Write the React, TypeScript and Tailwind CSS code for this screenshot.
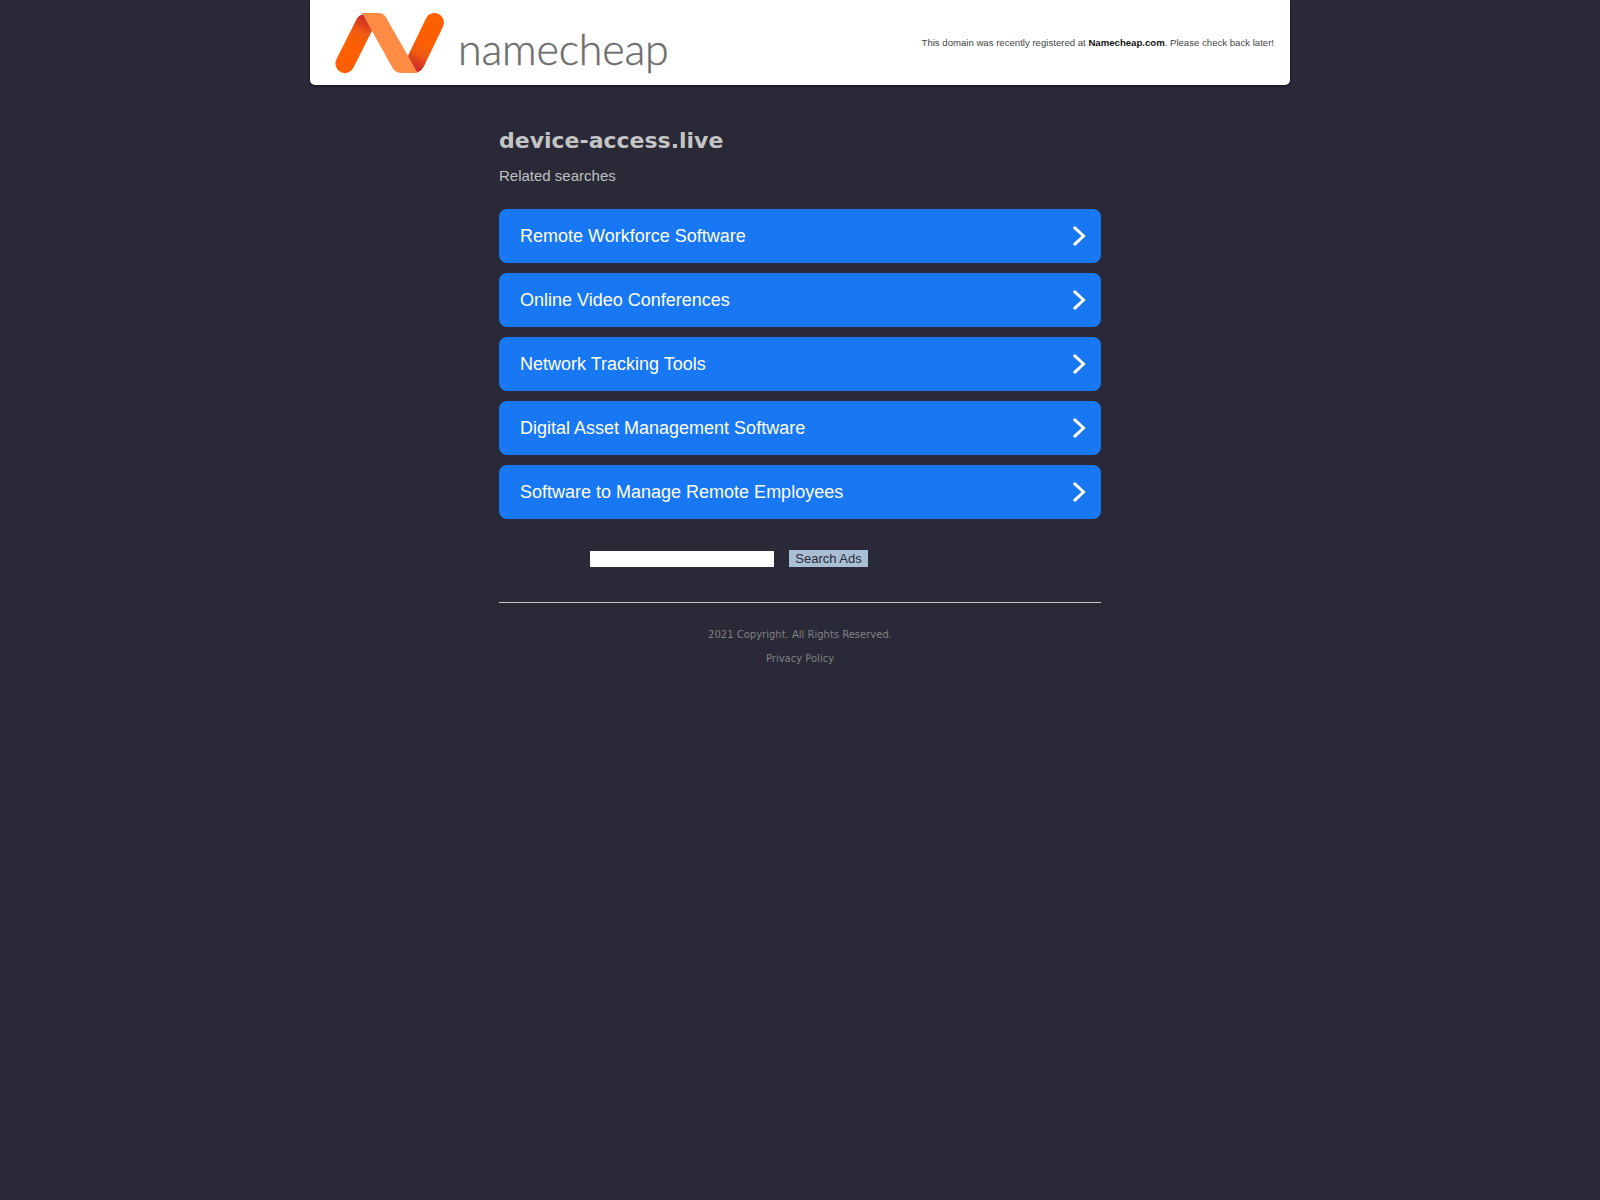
import React from 'react';

const links = [
  'Remote Workforce Software',
  'Online Video Conferences',
  'Network Tracking Tools',
  'Digital Asset Management Software',
  'Software to Manage Remote Employees',
];

// Namecheap ribbon mark
const Logo = () => (
  <svg width="120" height="72" viewBox="330 8 120 72" className="mt-[3px] shrink-0">
    <defs>
      <linearGradient id="ncLeft" x1="367" y1="16" x2="354" y2="44" gradientUnits="userSpaceOnUse">
        <stop offset="0" stopColor="#c8242c" />
        <stop offset="0.55" stopColor="#f05a12" />
        <stop offset="1" stopColor="#ff5f00" />
      </linearGradient>
      <linearGradient id="ncRight" x1="414" y1="70" x2="427" y2="42" gradientUnits="userSpaceOnUse">
        <stop offset="0" stopColor="#c8242c" />
        <stop offset="0.55" stopColor="#f05a12" />
        <stop offset="1" stopColor="#ff5f00" />
      </linearGradient>
    </defs>
    <path d="M344.9 63.6 L365 23.5" stroke="url(#ncLeft)" strokeWidth="19" strokeLinecap="round" fill="none" />
    <path d="M415 63 L434.5 22.5" stroke="url(#ncRight)" strokeWidth="19" strokeLinecap="round" fill="none" />
    <path
      d="M362 13 L379 13 C384 13 386 17 388 21 L417.5 72.5 Q417 73 415 73 L402 73 C396 73 394 70 392 67 Z"
      fill="#ff8c44"
    />
  </svg>
);

const App: React.FC = () => {
  return (
    <div className="min-h-[1200px] bg-[#292938] font-['Liberation_Sans',Arial,sans-serif]">
      <header className="mx-auto flex h-[85px] w-[980px] items-center justify-between rounded-b-[5px] bg-white pl-[20px] pr-[16px] shadow-[0_1px_3px_rgba(0,0,0,0.5)]">
        <div className="flex items-center">
          <Logo />
          <span className="ml-[8px] mt-[11px] font-['Lato',sans-serif] text-[43px] font-light leading-none tracking-[-0.2px] text-[#6d6e70] [-webkit-text-stroke:0.4px_#6d6e70]">
            namecheap
          </span>
        </div>
        <p className="mt-[2px] text-[9.6px] text-[#444]">
          This domain was recently registered at <b className="text-[#111]">Namecheap.com</b>. Please check back later!
        </p>
      </header>

      <main className="mx-auto w-[602px] pt-[42px]">
        <h1 className="font-['DejaVu_Sans',sans-serif] text-[22px] font-bold leading-[28px] text-[#c4c4c4]">device-access.live</h1>
        <p className="mt-[12px] text-[15px] leading-[18px] text-[#c0c0c0]">Related searches</p>

        <div className="mt-[24px] flex flex-col gap-[10px]">
          {links.map((label) => (
            <a key={label} href="#" className="flex h-[54px] items-center justify-between rounded-[8px] bg-[#1877f2] pl-[21px] pr-[15px] text-[18px] text-white">
              <span>{label}</span>
              <svg width="13" height="20" viewBox="0 0 13 20" fill="none" stroke="white" strokeWidth="3" strokeLinecap="square">
                <path d="M2 2 L10.5 10 L2 18" />
              </svg>
            </a>
          ))}
        </div>

        <form className="mt-[31px] flex items-end pl-[91px]">
          <input type="text" className="h-[16px] w-[184px] bg-white outline-none" />
          <button type="button" className="ml-[15px] h-[17px] w-[79px] bg-[#a9c0d4] text-[13px] leading-none text-[#292938]">
            Search Ads
          </button>
        </form>

        <hr className="mt-[35px] border-t border-[#c8c8c8]" />

        <footer className="mt-[24px] text-center font-['DejaVu_Sans',sans-serif] text-[10px] leading-[16px] text-[#808080]">
          <p>2021 Copyright. All Rights Reserved.</p>
          <p className="mt-[8px]">Privacy Policy</p>
        </footer>
      </main>
    </div>
  );
};

export default App;
